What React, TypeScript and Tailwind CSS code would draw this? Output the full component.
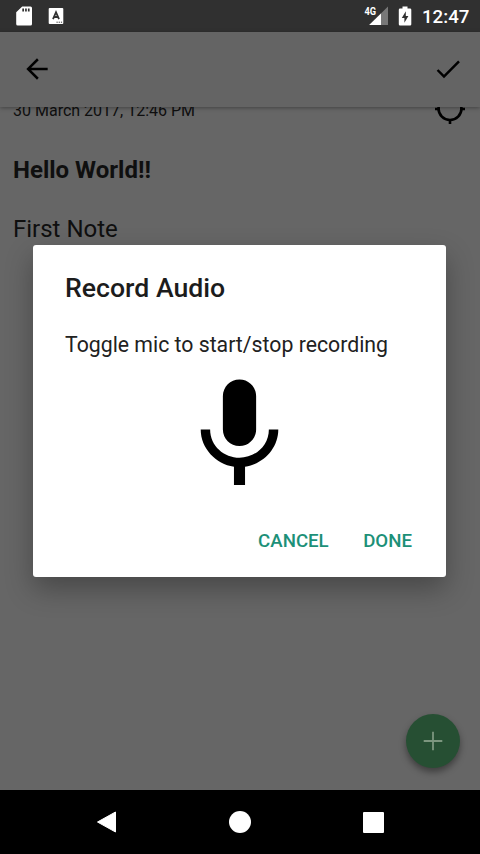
function StatusBar() {
  return (
    <div className="flex h-8 shrink-0 items-center bg-[#303030] text-white">
      <svg className="ml-4 h-5 w-4" viewBox="0 0 16 20" fill="#fff">
        <path fillRule="evenodd" d="M6.2 0.5H14.5a1.5 1.5 0 0 1 1.5 1.5V18a1.5 1.5 0 0 1-1.5 1.5H1.7A1.5 1.5 0 0 1 .2 18V6.3zM6.3 2.5v3h1.7v-3zM9.1 2.5v3h1.7v-3zM11.9 2.5v3h1.7v-3z" />
      </svg>
      <svg className="ml-4 h-4 w-4" viewBox="0 0 16 16">
        <rect x="0.7" y="0" width="14.6" height="16" rx="1" fill="#fff" />
        <path d="M5 11.2L8 4.2l3 7M6 9h4" fill="none" stroke="#303030" strokeWidth="1.8" />
        <path d="M8.5 14.2h1.2M10.7 14.2h1.2M12.9 14.2h1.2" stroke="#303030" strokeWidth="1" />
      </svg>
      <svg className="ml-auto h-5 w-6" viewBox="0 0 24 20">
        <path d="M24 0.5V19H5.2z" fill="#787878" />
        <path d="M17 7.4V19H5.2z" fill="#fff" />
        <path d="M0 0h13v10H0z" fill="#303030" />
        <text x="0.4" y="8.6" fill="#fff" fontFamily="Roboto, sans-serif" fontWeight="700" fontSize="10" textLength="11.6" lengthAdjust="spacingAndGlyphs">4G</text>
      </svg>
      <svg className="ml-2.5 h-5 w-3.5" viewBox="0 0 14 20">
        <path d="M4.5 0.5h5v2h2.6a1.2 1.2 0 0 1 1.2 1.2v14.6a1.2 1.2 0 0 1-1.2 1.2H2a1.2 1.2 0 0 1-1.2-1.2V3.7A1.2 1.2 0 0 1 2 2.5h2.5z" fill="#fff" />
        <path d="M7.8 5.2L3.8 12h2.6v4.8L10.4 10H7.8z" fill="#303030" />
      </svg>
      <span className="ml-2.5 mr-[11px] w-[47px] whitespace-nowrap pt-px text-[18.67px] leading-8 font-medium">12:47</span>
    </div>
  );
}

function Toolbar() {
  return (
    <header className="relative z-10 flex h-[75px] shrink-0 items-center justify-between bg-[#646464] px-[21px] pb-px shadow-[0_1px_4px_rgba(0,0,0,0.35)]">
      <svg className="h-8 w-8" viewBox="0 0 24 24">
        <path d="M20 11.1H7.6l5.7-5.7L12 4l-8 8 8 8 1.3-1.4-5.7-5.7H20z" fill="#000" />
      </svg>
      <svg className="-mr-[5px] h-8 w-8" viewBox="0 0 24 24">
        <path d="M9 16.3L4.8 12.1l-1.3 1.3L9 18.900 20.900 7l-1.300-1.300z" fill="#000" />
      </svg>
    </header>
  );
}

function Note() {
  return (
    <main className="relative flex-1 px-[13px] text-[#0f0f0f]">
      <div className="-mt-2 flex h-6 items-center justify-between">
        <span className="text-[16px] leading-6">30 March 2017, 12:46 PM</span>
        <svg className="mr-0.5 mb-1 h-8 w-8" viewBox="0 0 32 32" fill="none" stroke="#000" strokeWidth="2.6">
          <circle cx="17" cy="15.5" r="11.5" />
          <path d="M17 1v4M17 26v5M2 16h5M27 16h5" />
        </svg>
      </div>
      <h1 className="mt-[31px] text-2xl leading-8 font-bold">Hello World!!</h1>
      <p className="mt-[27px] text-2xl leading-8">First Note</p>
      <button className="absolute right-5 bottom-[22px] flex h-[54px] w-[54px] items-center justify-center rounded-full bg-[#264f33] shadow-[0_4px_7px_rgba(0,0,0,0.4)]">
        <svg className="h-5 w-5" viewBox="0 0 20 20" stroke="#7c967f" strokeWidth="1.8">
          <path d="M10 .7v18.600M.7 10h18.600" />
        </svg>
      </button>
    </main>
  );
}

function RecordDialog() {
  return (
    <div className="absolute top-[245px] left-[33px] z-20 flex h-[332px] w-[413px] flex-col rounded-[3px] bg-white px-8 shadow-[0_12px_28px_rgba(0,0,0,0.3)]">
      <h2 className="mt-[27px] text-[26.67px] leading-8 font-medium text-[#1c1c1c]">Record Audio</h2>
      <p className="mt-[26px] text-[21.25px] leading-[30px] text-[#212121]">Toggle mic to start/stop recording</p>
      <svg className="mt-[8px] h-[134px] w-[133px] self-center" viewBox="0 0 24 24">
        <path d="M12 14c1.66 0 3-1.34 3-3V5c0-1.66-1.34-3-3-3S9 3.34 9 5v6c0 1.66 1.34 3 3 3zm5.3-3c0 3-2.54 5.1-5.3 5.1S6.7 14 6.7 11H5c0 3.41 2.72 6.23 6 6.72V21h2v-3.28c3.28-.48 6-3.3 6-6.72h-1.7z" fill="#000" />
      </svg>
      <div className="mt-[23px] mr-[2px] flex justify-end gap-[34.5px] text-[18.67px] leading-8 font-medium text-[#1c9078]">
        <button>CANCEL</button>
        <button>DONE</button>
      </div>
    </div>
  );
}

function NavBar() {
  return (
    <nav className="flex h-16 shrink-0 items-center justify-center gap-28 bg-black pr-0.5">
      <svg className="h-[22px] w-[22px]" viewBox="0 0 22 22">
        <path d="M20.5 1v20L2.500 11z" fill="#fff" stroke="#fff" strokeLinejoin="round" />
      </svg>
      <div className="h-[22px] w-[22px] rounded-full bg-white" />
      <div className="h-[21px] w-[21px] rounded-[1px] bg-white" />
    </nav>
  );
}

export default function App() {
  return (
    <div className="relative flex h-[854px] w-[480px] flex-col overflow-hidden bg-[#666666] font-['Roboto',sans-serif]">
      <StatusBar />
      <Toolbar />
      <Note />
      <NavBar />
      <RecordDialog />
    </div>
  );
}
